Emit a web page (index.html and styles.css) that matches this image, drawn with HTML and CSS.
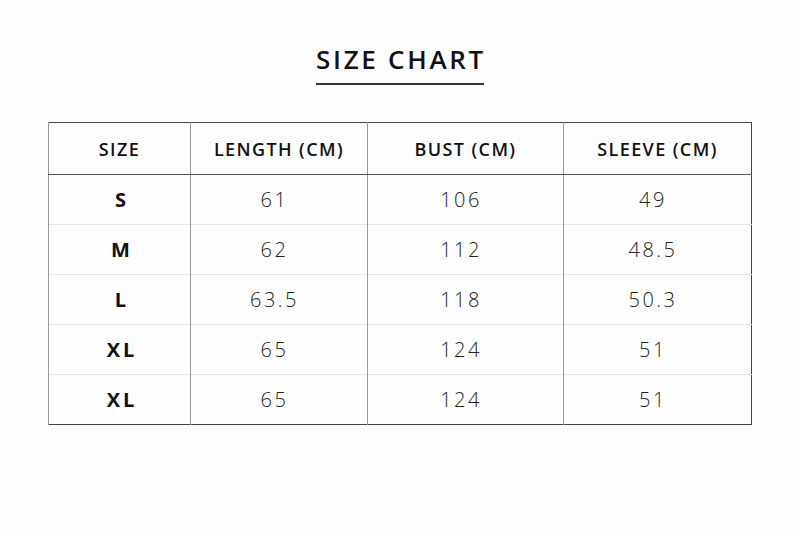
FILE: index.html
```html
<!DOCTYPE html>
<html>
<head>
<meta charset="utf-8">
<link rel="stylesheet" href="styles.css">
</head>
<body>
<div class="page">
  <h1 class="title">SIZE CHART</h1>
  <div class="rule"></div>
  <table class="chart">
    <colgroup>
      <col class="c1"><col class="c2"><col class="c3"><col class="c4">
    </colgroup>
    <thead>
      <tr><th>SIZE</th><th>LENGTH (CM)</th><th>BUST (CM)</th><th>SLEEVE (CM)</th></tr>
    </thead>
    <tbody>
      <tr><th>S</th><td>61</td><td>106</td><td>49</td></tr>
      <tr><th>M</th><td>62</td><td>112</td><td>48.5</td></tr>
      <tr><th>L</th><td>63.5</td><td>118</td><td>50.3</td></tr>
      <tr><th>XL</th><td>65</td><td>124</td><td>51</td></tr>
      <tr><th>XL</th><td>65</td><td>124</td><td>51</td></tr>
    </tbody>
  </table>
</div>
</body>
</html>
```
FILE: styles.css
```css
html, body {
  margin: 0;
  padding: 0;
  background: #fdfdfd;
}
.page {
  width: 800px;
  height: 533px;
  display: flex;
  flex-direction: column;
  align-items: center;
  font-family: "Open Sans", "Liberation Sans", sans-serif;
  color: #111;
}
.title {
  margin: 43px 0 0 0;
  font-size: 26px;
  line-height: 32px;
  font-weight: 600;
  letter-spacing: 2.7px;
  padding-left: 2px;
}
.rule {
  width: 168px;
  height: 2px;
  background: #333;
  margin-top: 8px;
}
.chart {
  margin-top: 37px;
  margin-left: -1px;
  width: 703px;
  border-collapse: collapse;
  border: 1px solid #444;
  table-layout: fixed;
}
.c1 { width: 142px; }
.c2 { width: 177px; }
.c3 { width: 196px; }
.c4 { width: 188px; }
.chart th, .chart td {
  text-align: center;
  padding: 0;
  border-left: 1px solid #999;
  border-top: 1px solid #e6e6e6;
  height: 49px;
}
.chart thead th {
  height: 51px;
  font-size: 18px;
  font-weight: 600;
  letter-spacing: 1.4px;
  padding-left: 1px;
  border-top: none;
  border-bottom: 1px solid #555;
}
.chart tbody th {
  font-size: 20px;
  font-weight: 700;
  letter-spacing: 3px;
  padding-left: 6px;
}
.chart td {
  font-size: 20px;
  font-weight: 300;
  letter-spacing: 2.5px;
  padding-right: 8px;
  color: #222;
}
```
